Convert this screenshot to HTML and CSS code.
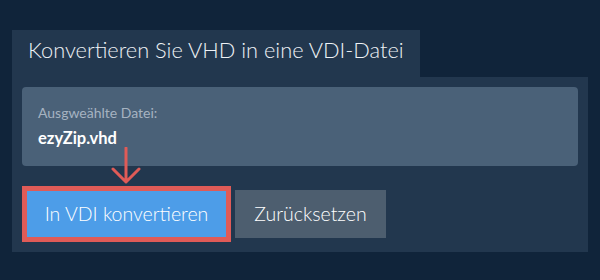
FILE: index.html
```html
<!DOCTYPE html>
<html lang="de">
<head>
  <meta charset="UTF-8">
  <title>VHD in VDI konvertieren</title>
  <link rel="stylesheet" href="styles.css">
</head>
<body>

  <!-- CONVERTER PANEL -->
  <main class="converter">
    <h1 class="tab-title">Konvertieren Sie VHD in eine VDI-Datei</h1>

    <section class="panel">
      <!-- Datei-Info -->
      <div class="file-box">
        <p class="file-label">Ausgweählte Datei:</p>
        <p class="file-name">ezyZip.vhd</p>
      </div>

      <!-- Hinweis-Pfeil -->
      <svg class="hint-arrow" width="30" height="38" viewBox="0 0 30 38">
        <path d="M15 1 V35 M2 22 L15 35 L28 22" fill="none" stroke="#e05b57" stroke-width="3" stroke-linecap="round" stroke-linejoin="round"/>
      </svg>

      <div class="actions">
        <button class="btn btn-primary" type="button">In VDI konvertieren</button>
        <button class="btn btn-reset" type="button">Zurücksetzen</button>
      </div>
    </section>
  </main>

</body>
</html>
```

FILE: styles.css
```css
/* ---------- RESET / BASE ---------- */
* {
  margin: 0;
  padding: 0;
  box-sizing: border-box;
  font-family: Lato, 'Open Sans', sans-serif;
}
body {
  background-color: #10243a;
  color: #fff;
  overflow: hidden;
}

/* ---------- CONVERTER ---------- */
.converter {
  padding: 30px 0 0 12px;
}
.tab-title {
  display: inline-block;
  width: 408px;
  padding: 6px 16px 13px;
  background: #22374e;
  font-size: 21.8px;
  line-height: 28px;
  font-weight: 300;
  color: #eef2f6;
  white-space: nowrap;
  vertical-align: top;
}
.panel {
  position: relative;
  width: 576px;
  background: #22374e;
  padding: 10px 10px 14px;
}

/* Datei-Info */
.file-box {
  background: #4a6178;
  border-radius: 4px;
  padding: 16px 16px 17px;
}
.file-label {
  font-size: 14px;
  line-height: 20px;
  color: #a6b3c1;
}
.file-name {
  margin-top: 4px;
  font-size: 16.5px;
  line-height: 22px;
  font-weight: 700;
  color: #fff;
}

/* Pfeil (Overlay) */
.hint-arrow {
  position: absolute;
  left: 99px;
  top: 70px;
}

/* Buttons */
.actions {
  display: flex;
  gap: 8px;
  margin-top: 24px;
  padding-left: 4px;
}
.btn {
  height: 48px;
  line-height: 48px;
  padding: 0 16px;
  border: none;
  font-size: 19.5px;
  font-weight: 300;
  color: #fff;
  cursor: pointer;
}
.btn-primary {
  width: 201px;
  background: #4d9de8;
  outline: 5px solid #e05b57;
  outline-offset: -1px;
}
.btn-reset {
  width: 151px;
  background: #4d5e6f;
}
```
